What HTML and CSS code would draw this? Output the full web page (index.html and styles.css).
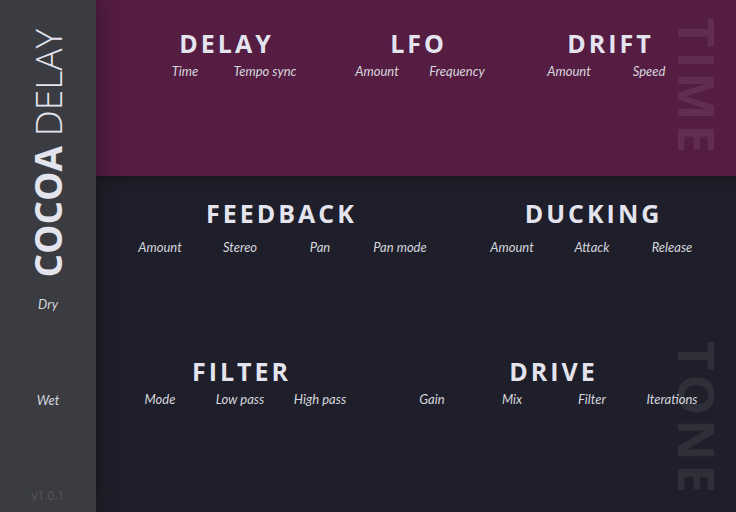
FILE: index.html
```html
<!DOCTYPE html>
<html>
<head>
<meta charset="utf-8">
<link rel="stylesheet" href="styles.css">
</head>
<body>
<div class="app">
  <aside class="sidebar">
    <div class="logo"><b>COCOA</b> <span>DELAY</span></div>
    <div class="mix dry">Dry</div>
    <div class="mix wet">Wet</div>
    <div class="version">v1.0.1</div>
  </aside>
  <main class="main">
    <section class="panel time">
      <div class="row">
        <div class="group g2">
          <h2>DELAY</h2>
          <div class="knobs"><div class="knob">Time</div><div class="knob">Tempo sync</div></div>
        </div>
        <div class="group g2">
          <h2>LFO</h2>
          <div class="knobs"><div class="knob">Amount</div><div class="knob">Frequency</div></div>
        </div>
        <div class="group g2">
          <h2>DRIFT</h2>
          <div class="knobs"><div class="knob">Amount</div><div class="knob">Speed</div></div>
        </div>
      </div>
      <div class="watermark">TIME</div>
    </section>
    <section class="panel tone">
      <div class="row first">
        <div class="group g4">
          <h2>FEEDBACK</h2>
          <div class="knobs"><div class="knob">Amount</div><div class="knob">Stereo</div><div class="knob">Pan</div><div class="knob">Pan mode</div></div>
        </div>
        <div class="group g3">
          <h2>DUCKING</h2>
          <div class="knobs"><div class="knob">Amount</div><div class="knob">Attack</div><div class="knob">Release</div></div>
        </div>
      </div>
      <div class="row second">
        <div class="group g3">
          <h2>FILTER</h2>
          <div class="knobs"><div class="knob">Mode</div><div class="knob">Low pass</div><div class="knob">High pass</div></div>
        </div>
        <div class="group g4">
          <h2>DRIVE</h2>
          <div class="knobs"><div class="knob">Gain</div><div class="knob">Mix</div><div class="knob">Filter</div><div class="knob">Iterations</div></div>
        </div>
      </div>
      <div class="watermark">TONE</div>
    </section>
  </main>
</div>
</body>
</html>
```
FILE: styles.css
```css
html, body {
  margin: 0;
  padding: 0;
  width: 736px;
  height: 512px;
  overflow: hidden;
  background: #1e1f2a;
}
.app {
  display: flex;
  width: 736px;
  height: 512px;
  font-family: "Open Sans", "DejaVu Sans", sans-serif;
}
.sidebar {
  width: 96px;
  flex: 0 0 96px;
  background: #3b3c41;
  display: flex;
  flex-direction: column;
  align-items: center;
  position: relative;
  z-index: 3;
  box-shadow: 0 0 24px rgba(0, 0, 0, 0.4);
}
.logo {
  writing-mode: vertical-rl;
  transform: rotate(180deg);
  margin-top: 29px;
  font-size: 37px;
  line-height: 38px;
  color: #e3e4ee;
  white-space: nowrap;
}
.logo b { font-weight: 700; }
.logo span { font-weight: 300; }
.mix {
  font-family: "Lato", sans-serif;
  font-style: italic;
  font-size: 13px;
  color: #d6d6de;
  line-height: 16px;
}
.dry { margin-top: 19px; }
.wet { margin-top: 80px; }
.version {
  margin-top: auto;
  margin-bottom: 8px;
  font-size: 12px;
  color: #56575d;
  line-height: 16px;
}
.main {
  flex: 1;
  display: flex;
  flex-direction: column;
}
.panel {
  position: relative;
}
.time {
  height: 176px;
  flex: 0 0 176px;
  background: #551d42;
  z-index: 2;
  box-shadow: 0 3px 12px rgba(0, 0, 0, 0.3);
  padding-top: 27px;
  box-sizing: border-box;
}
.tone {
  flex: 1;
  background: #1e1f2a;
  padding-top: 21px;
  box-sizing: border-box;
}
.row {
  display: flex;
  justify-content: center;
  gap: 32px;
}
.time .row { padding-left: 2px; }
.second { margin-top: 100px; }
.group {
  display: flex;
  flex-direction: column;
  align-items: center;
}
.g2 { width: 160px; }
.g3 { width: 240px; }
.g4 { width: 320px; }
h2 {
  margin: 0;
  font-size: 25px;
  line-height: 32px;
  font-weight: 700;
  letter-spacing: 3px;
  color: #e4e4ef;
  padding-left: 3px;
}
.knobs {
  display: flex;
  width: 100%;
  margin-top: 4px;
}
.first .knobs { margin-top: 10px; }
.knob {
  flex: 1;
  text-align: center;
  font-family: "Lato", sans-serif;
  font-style: italic;
  font-size: 13px;
  line-height: 16px;
  color: #d6d6de;
}
.watermark {
  position: absolute;
  right: 12px;
  writing-mode: vertical-rl;
  font-weight: 700;
  font-size: 51px;
  line-height: 52px;
  letter-spacing: 4px;
  color: rgba(255, 255, 255, 0.075);
  white-space: nowrap;
}
.time .watermark { top: 18px; }
.tone .watermark { top: 165px; }
```
